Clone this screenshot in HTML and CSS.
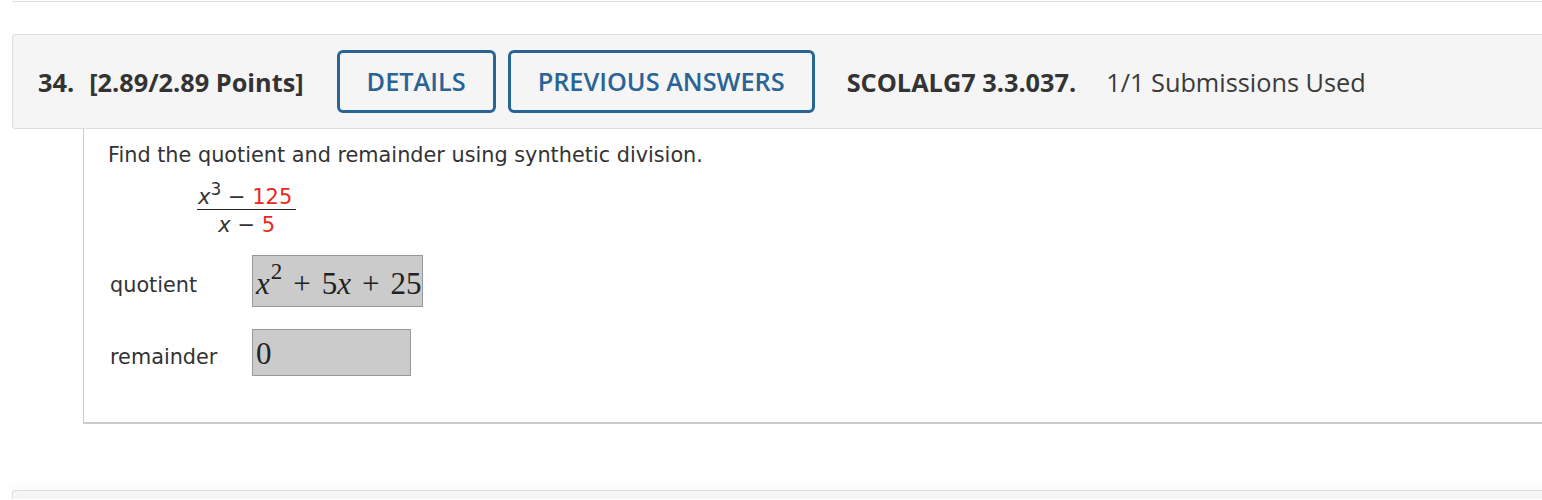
FILE: index.html
```html
<!DOCTYPE html>
<html>
<head>
  <meta charset="utf-8">
  <title>Question 34</title>
  <link rel="stylesheet" href="styles.css">
</head>
<body>
    <div class="prev-card"></div>

    <div class="question-head">
        <span class="qnum">34.</span>
        <span class="points">[2.89/2.89 Points]</span>
        <div class="buttons">
            <a class="btn">DETAILS</a>
            <a class="btn">PREVIOUS ANSWERS</a>
        </div>
        <span class="ref">SCOLALG7 3.3.037.</span>
        <span class="subs">1/1 Submissions Used</span>
    </div>

    <div class="question-body">
        <p class="prompt">Find the quotient and remainder using synthetic division.</p>
        <div class="frac">
            <div class="num"><i>x</i><sup>3</sup> &minus; <span class="red">125</span></div>
            <div class="den"><i>x</i> &minus; <span class="red">5</span></div>
        </div>
        <div class="answer-row">
            <span class="label">quotient</span>
            <div class="box quotient"><i>x</i><sup>2</sup><span class="op">+</span>5<i>x</i><span class="op">+</span>25</div>
        </div>
        <div class="answer-row">
            <span class="label">remainder</span>
            <div class="box remainder">0</div>
        </div>
    </div>

    <div class="next-card"></div>
</body>
</html>
```

FILE: styles.css
```css
html, body {
    margin: 0;
    padding: 0;
    overflow: hidden;
    background: #fff;
}
body {
    padding-left: 12px;
    font-family: "Open Sans", Arial, sans-serif;
    color: #333;
}
.prev-card {
    height: 1px;
    margin-right: -20px;
    border: 1px solid #ddd;
    border-top: none;
    border-radius: 0 0 3px 3px;
}
.question-head {
    display: flex;
    align-items: center;
    margin-top: 32px;
    margin-right: -20px;
    padding: 15px 0 15px 25px;
    background: #f5f5f5;
    border: 1px solid #ddd;
    border-radius: 3px;
    font-size: 25.3px;
    white-space: nowrap;
}
.qnum {
    font-weight: 700;
    margin-right: 15px;
}
.points {
    font-weight: 700;
    margin-right: 33px;
}
.buttons {
    display: flex;
    gap: 12px;
    margin-right: 32px;
}
.btn {
    display: block;
    padding: 0 27px;
    height: 57px;
    line-height: 57px;
    border: 3px solid #2a6496;
    border-radius: 6px;
    color: #2a6496;
    font-weight: 600;
}
.ref {
    font-weight: 700;
    margin-right: 30px;
}
.subs {
    color: #3a3a3a;
}
.question-body {
    margin-left: 71px;
    margin-right: -20px;
    padding: 13px 0 46px 24px;
    border-left: 1px solid #ccc;
    border-bottom: 2px solid #ccc;
    font-family: "DejaVu Sans", Verdana, sans-serif;
    font-size: 20.8px;
    color: #333;
}
.prompt {
    margin: 0;
    line-height: 26px;
}
.frac {
    display: inline-flex;
    flex-direction: column;
    align-items: center;
    margin: 17px 0 0 89px;
    font-size: 21px;
}
.frac sup {
    font-size: 17px;
    vertical-align: 9px;
    line-height: 0;
}
.num {
    padding: 0 4px 0 1px;
    border-bottom: 1px solid #222;
    line-height: 24px;
}
.den {
    line-height: 30px;
}
.red {
    color: #e8291c;
}
.answer-row {
    display: flex;
    align-items: center;
    margin-top: 15px;
}
.answer-row + .answer-row {
    margin-top: 22px;
}
.label {
    width: 142px;
    padding: 8px 0 0 2px;
}
.box {
    box-sizing: border-box;
    height: 52px;
    padding: 0 2px 0 3px;
    background: #cbcbcb;
    border: 1px solid #999;
    font-family: "Liberation Serif", "Times New Roman", serif;
    font-size: 31px;
    line-height: 56px;
    color: #222;
}
.box i {
    font-style: italic;
}
.box sup {
    font-size: 23px;
    vertical-align: 15px;
    line-height: 0;
    margin-left: 1px;
}
.op {
    margin: 0 11px;
}
.quotient {
    width: 171px;
}
.remainder {
    width: 159px;
    height: 47px;
    line-height: 47px;
}
.next-card {
    height: 8px;
    margin-top: 66px;
    margin-right: -20px;
    background: #f5f5f5;
    border: 1px solid #ddd;
    border-bottom: none;
    border-radius: 3px 3px 0 0;
    box-shadow: 0 -4px 10px rgba(0, 0, 0, 0.03);
}
```
